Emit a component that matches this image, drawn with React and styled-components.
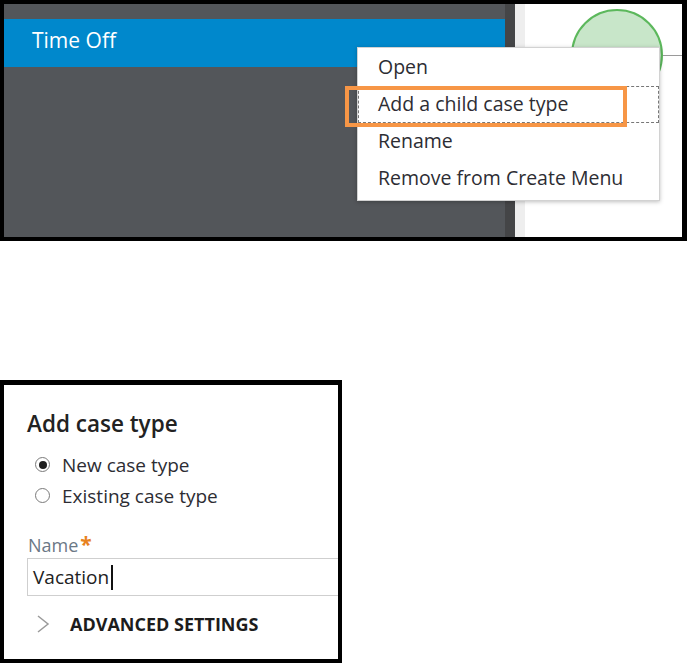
import React from "react";
import styled, { createGlobalStyle } from "styled-components";

const GlobalStyle = createGlobalStyle`
  body {
    margin: 0;
    background: #fff;
    font-family: "Open Sans", "Noto Sans", sans-serif;
  }
`;

const Page = styled.div`
  display: flex;
  flex-direction: column;
  width: 687px;
`;

const TopFrame = styled.div`
  position: relative;
  box-sizing: border-box;
  width: 687px;
  height: 241px;
  border: 4px solid #000;
  border-right-width: 5px;
  display: flex;
  overflow: hidden;
`;

const Nav = styled.div`
  width: 501px;
  background: #53565a;
  padding-top: 15px;
`;

const NavRow = styled.div`
  height: 48px;
  box-sizing: border-box;
  padding: 0 0 5px 28px;
  line-height: 43px;
  background: #0088cc;
  color: #fff;
  font-size: 21px;
`;

const Strip = styled.div`
  width: 10px;
  background: ${(p) => p.color};
`;

const Canvas = styled.div`
  position: relative;
  flex: 1;
  background: #fff;
`;

const Stage = styled.div`
  position: absolute;
  left: 46px;
  top: 5px;
  width: 88px;
  height: 88px;
  border: 2px solid #5cb85c;
  border-radius: 50%;
  background: #c8e6c9;
`;

const Connector = styled.div`
  position: absolute;
  left: 138px;
  top: 51px;
  right: 0;
  height: 1px;
  background: #9a9a9a;
`;

const Menu = styled.ul`
  position: absolute;
  left: 353px;
  top: 43px;
  width: 303px;
  box-sizing: border-box;
  margin: 0;
  padding: 1px 0 3px;
  list-style: none;
  background: #fff;
  border: 1px solid #d2d2d2;
  box-shadow: 0 1px 4px rgba(0, 0, 0, 0.25);
`;

const MenuItem = styled.li`
  height: 37px;
  line-height: 36px;
  padding-left: 20px;
  font-size: 19.5px;
  color: #2d2d33;
  white-space: nowrap;
  outline: ${(p) => (p.focused ? "1px dashed #777" : "none")};
  outline-offset: -1px;
`;

const Callout = styled.div`
  position: absolute;
  left: 341px;
  top: 82px;
  width: 282px;
  height: 41px;
  box-sizing: border-box;
  border: 4px solid #f79646;
`;

const BottomFrame = styled.div`
  margin-top: 139px;
  box-sizing: border-box;
  width: 342px;
  height: 283px;
  border: 4px solid #000;
  border-top-width: 5px;
  overflow: hidden;
  padding: 25px 0 0 23px;
`;

const Title = styled.h2`
  margin: 0;
  font-size: 22.5px;
  font-weight: 600;
  line-height: 27px;
  color: #222;
`;

const RadioGroup = styled.div`
  display: flex;
  flex-direction: column;
  margin-top: 12px;
  margin-left: 8px;
`;

const RadioRow = styled.label`
  display: flex;
  align-items: center;
  gap: 12px;
  height: 31px;
  font-size: 19px;
  color: #2d2d33;
`;

const RadioDot = styled.span`
  box-sizing: border-box;
  width: 15px;
  height: 15px;
  border: 1.5px solid #7a7a7a;
  border-radius: 50%;
  display: flex;
  align-items: center;
  justify-content: center;
  &::after {
    content: "";
    width: 8px;
    height: 8px;
    border-radius: 50%;
    background: ${(p) => (p.checked ? "#1e1e1e" : "transparent")};
  }
`;

const FieldLabel = styled.div`
  margin-top: 23px;
  margin-left: 1px;
  font-size: 18px;
  line-height: 22px;
  color: #6b7886;
`;

const Required = styled.span`
  margin-left: 2px;
  font-size: 21px;
  line-height: 0;
  color: #e8831f;
  font-weight: 700;
`;

const TextBox = styled.div`
  margin-top: 2px;
  width: 360px;
  height: 38px;
  box-sizing: border-box;
  border: 1px solid #cfcfcf;
  padding-left: 5px;
  display: flex;
  align-items: center;
  font-size: 19px;
  color: #222;
`;

const Caret = styled.span`
  display: inline-block;
  width: 1.5px;
  height: 25px;
  margin-left: 2px;
  background: #111;
`;

const Advanced = styled.div`
  margin-top: 16px;
  margin-left: 9px;
  display: flex;
  align-items: center;
  gap: 20px;
  font-size: 18px;
  font-weight: 700;
  color: #1c1c1c;
`;

export default function App() {
  return (
    <>
      <GlobalStyle />
      <Page>
        <TopFrame>
          <Nav>
            <NavRow>Time Off</NavRow>
          </Nav>
          <Strip color="#444547" />
          <Strip color="#eeeeee" />
          <Canvas>
            <Stage />
            <Connector />
          </Canvas>
          <Menu>
            <MenuItem>Open</MenuItem>
            <MenuItem focused>Add a child case type</MenuItem>
            <MenuItem>Rename</MenuItem>
            <MenuItem>Remove from Create Menu</MenuItem>
          </Menu>
          <Callout />
        </TopFrame>

        <BottomFrame>
          <Title>Add case type</Title>
          <RadioGroup>
            <RadioRow>
              <RadioDot checked />
              New case type
            </RadioRow>
            <RadioRow>
              <RadioDot />
              Existing case type
            </RadioRow>
          </RadioGroup>
          <FieldLabel>
            Name<Required>*</Required>
          </FieldLabel>
          <TextBox>
            Vacation
            <Caret />
          </TextBox>
          <Advanced>
            <svg width="14" height="18" viewBox="0 0 14 18">
              <polyline points="2,1 12,9 2,17" fill="none" stroke="#9a9a9a" strokeWidth="1.5" />
            </svg>
            ADVANCED SETTINGS
          </Advanced>
        </BottomFrame>
      </Page>
    </>
  );
}
